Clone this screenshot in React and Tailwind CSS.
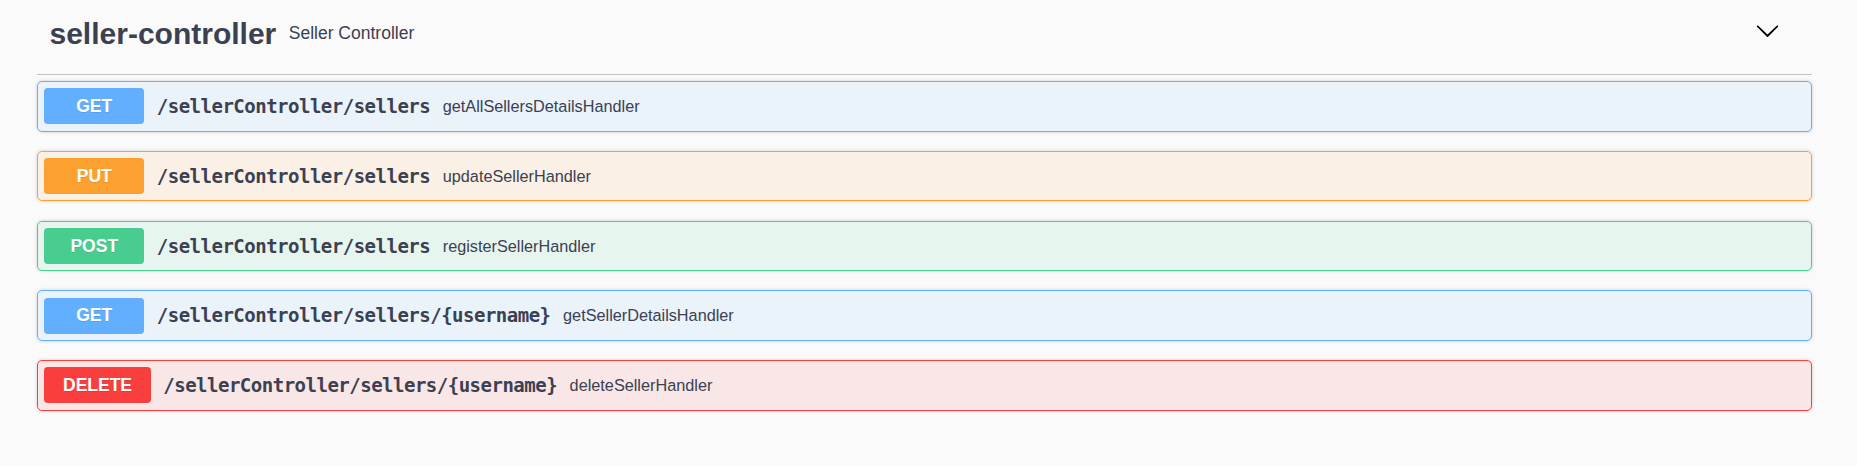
// Swagger-style operation list for the seller controller
const SANS = { fontFamily: '"Liberation Sans", Arial, sans-serif' };

const METHOD_STYLE = {
  GET:    { box: 'border-[#61affe] bg-[#61affe]/10', badge: 'bg-[#61affe]' },
  PUT:    { box: 'border-[#fca130] bg-[#fca130]/10', badge: 'bg-[#fca130]' },
  POST:   { box: 'border-[#49cc90] bg-[#49cc90]/10', badge: 'bg-[#49cc90]' },
  DELETE: { box: 'border-[#f93e3e] bg-[#f93e3e]/10', badge: 'bg-[#f93e3e]' },
};

const OPS = [
  { method: 'GET',    path: '/sellerController/sellers',            desc: 'getAllSellersDetailsHandler' },
  { method: 'PUT',    path: '/sellerController/sellers',            desc: 'updateSellerHandler' },
  { method: 'POST',   path: '/sellerController/sellers',            desc: 'registerSellerHandler' },
  { method: 'GET',    path: '/sellerController/sellers/{username}', desc: 'getSellerDetailsHandler' },
  { method: 'DELETE', path: '/sellerController/sellers/{username}', desc: 'deleteSellerHandler' },
];

function Chevron() {
  return (
    <svg width="25" height="25" viewBox="0 0 20 20" className="mb-[6px] shrink-0" fill="#000">
      <path d="M17.418 6.109c.272-.268.709-.268.979 0s.271.701 0 .969l-7.908 7.83c-.27.268-.707.268-.979 0l-7.908-7.83c-.27-.268-.27-.701 0-.969.271-.268.709-.268.979 0L10 13.25l7.418-7.141z" />
    </svg>
  );
}

function Operation({ method, path, desc }) {
  const st = METHOD_STYLE[method];
  return (
    <div className={'mb-[19.25px] rounded-[5px] border shadow-[0_0_3.75px_rgba(0,0,0,0.19)] ' + st.box}>
      <div className="flex items-center p-[6.25px]">
        <span
          className={'flex h-[36px] min-w-[100px] items-center justify-center rounded-[3.75px] px-[18.75px] text-[17.5px] font-bold text-white [text-shadow:0_1px_0_rgba(0,0,0,0.1)] ' + st.badge}
          style={SANS}>
          {method}
        </span>
        <span
          className="px-[12.5px] text-[19px] font-bold tracking-[-0.5px] text-[#3b4151]"
          style={{ fontFamily: '"DejaVu Sans Mono", "Liberation Mono", monospace' }}>
          {path}
        </span>
        <span className="flex-1 text-[16.25px] text-[#3b4151]" style={SANS}>{desc}</span>
      </div>
    </div>
  );
}

export default function App() {
  return (
    <div className="h-[466px] w-full overflow-hidden bg-[#fafafa]" style={SANS}>
      <div className="ml-[37px] w-[1775px]">

        {/* Tag header */}
        <div className="flex h-[75px] items-center border-b border-[#c1c3c7] pb-[8px] pl-[12.5px] pr-[32px]">
          <h4 className="text-[30px] font-bold leading-normal text-[#3b4151]">seller-controller</h4>
          <small className="flex-1 px-[12.5px] text-[17.5px] text-[#3b4151]">Seller Controller</small>
          <Chevron />
        </div>

        {/* Operations */}
        <div className="mt-[6px]">
          {OPS.map((op, i) => <Operation key={i} {...op} />)}
        </div>

      </div>
    </div>
  );
}
